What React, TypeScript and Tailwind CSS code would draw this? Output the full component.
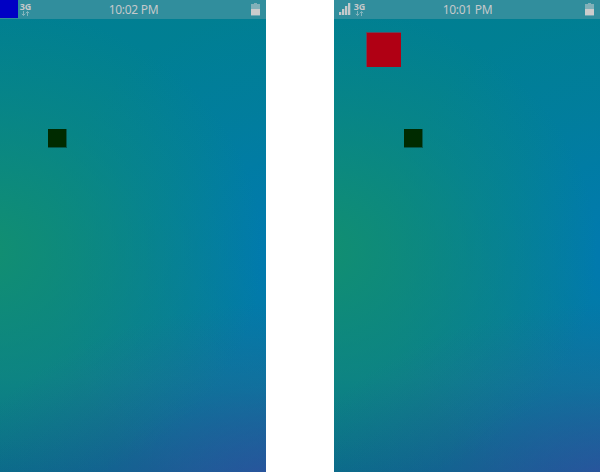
import React from "react";

const wallpaper =
  "bg-[radial-gradient(ellipse_125%_42%_at_108%_106%,#384aa3_0%,#384aa398_20%,#384aa336_58%,#384aa300_100%),radial-gradient(ellipse_105%_52%_at_-6%_53%,#128f70_0%,#128f70bc_24%,#128f7058_60%,#128f7000_100%),radial-gradient(ellipse_95%_54%_at_112%_55%,#0079b2_0%,#0079b2b8_22%,#0079b248_60%,#0079b200_100%),linear-gradient(180deg,#007f92_0%,#027f97_45%,#0a7c90_80%,#086a8b_100%)]";

function Signal() {
  return (
    <svg width="12" height="13" viewBox="0 0 12 13" fill="#c5c9cb">
      <rect x="0" y="9" width="2.3" height="3" />
      <rect x="3" y="6" width="2.3" height="6" />
      <rect x="6" y="3" width="2.3" height="9" />
      <rect x="9" y="0" width="2.3" height="12" />
    </svg>
  );
}

function Network() {
  return (
    <div className="flex h-[15px] w-[11px] flex-col items-center">
      <span className="h-[8px] font-['Open_Sans',sans-serif] text-[9px] leading-[7px] font-bold text-[#c5c9cb]">3G</span>
      <svg width="9" height="5" viewBox="0 0 9 5" fill="none" stroke="#83b5bd" strokeWidth="1">
        <path d="M2.5 0V4.5M.8 2.8l1.7 1.7 1.7-1.7M6.5 5V.5M4.8 2.2L6.5.5l1.7 1.7" />
      </svg>
    </div>
  );
}

function Battery() {
  return (
    <svg width="9" height="13" viewBox="0 0 9 13">
      <path d="M3 0h3v1h3v5H0V1h3z" fill="#82b1b9" />
      <rect y="6" width="9" height="6" fill="#cccccc" />
      <rect y="12" width="9" height="1" fill="#71aab5" />
    </svg>
  );
}

function Phone({ time, marked }: { time: string; marked: boolean }) {
  return (
    <div className={`relative h-[472px] w-[266px] overflow-hidden ${wallpaper}`}>
      <header className="grid h-[19px] grid-cols-[1fr_auto_1fr] bg-[#318e9d]">
        <div className="flex">
          {marked ? (
            <div className="h-[18px] w-[18px] bg-[#0000c4]" />
          ) : (
            <div className="w-[18px] pt-[3px] pl-[5px]"><Signal /></div>
          )}
          <div className="pt-[3px] pl-[2px]"><Network /></div>
        </div>
        <time className="pl-px font-['Noto_Sans',sans-serif] text-[12px] leading-[19px] tracking-[-0.3px] text-[#c5c9cb]">{time}</time>
        <div className="flex justify-end pt-[3px] pr-[6px]"><Battery /></div>
      </header>
      {!marked && <div className="absolute top-[32px] left-[32px] h-[35px] w-[35px] border-t border-l border-[#65455a] bg-[#b00014]" />}
      <div className={`absolute top-[129px] h-[19px] w-[19px] border-r border-b border-[#07584d] bg-[#002b00] ${marked ? "left-[48px]" : "left-[70px]"}`} />
    </div>
  );
}

export default function App() {
  return (
    <main className="flex h-[472px] w-[600px] justify-between overflow-hidden bg-white">
      <Phone time="10:02 PM" marked />
      <Phone time="10:01 PM" marked={false} />
    </main>
  );
}
